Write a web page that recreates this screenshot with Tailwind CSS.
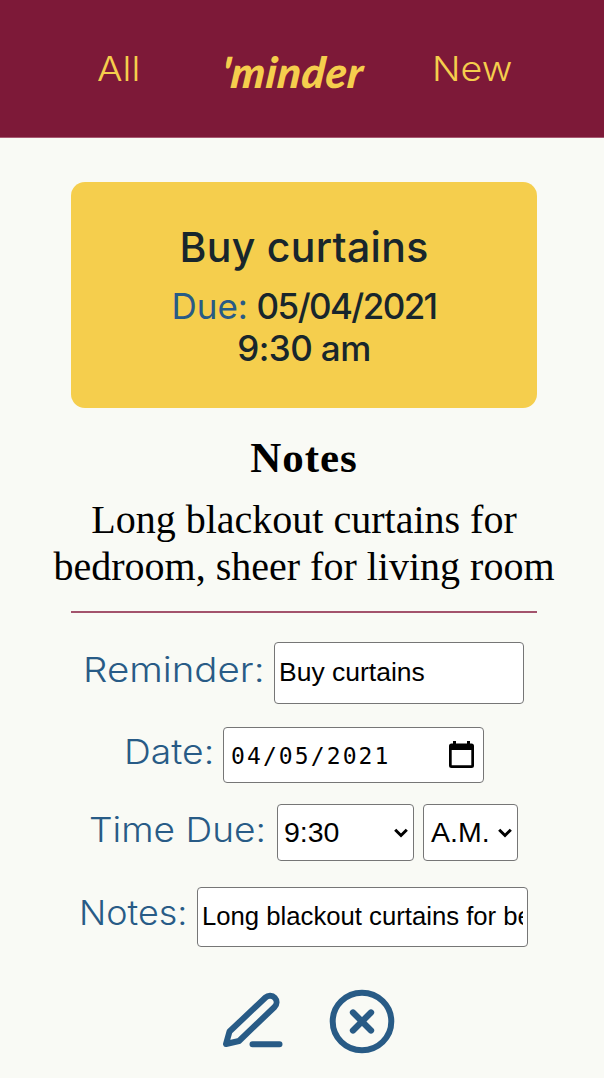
<!DOCTYPE html>
<html lang="en">
<head>
<meta charset="utf-8">
<title>'minder</title>
<script src="https://cdn.jsdelivr.net/npm/@tailwindcss/browser@4"></script>
</head>
<body class="h-[1078px] w-[604px] overflow-hidden bg-[#f9faf5] font-['Inter',sans-serif] text-black">
<header class="flex h-[138px] items-start border-b border-[#a85a72] bg-[#7d1938] pl-[97px] font-[330] whitespace-nowrap text-[#f5ce4d]">
  <a class="mt-[48px] w-[125px] origin-left scale-x-[1.1] text-[34.5px] leading-[42px]">All</a>
  <h1 class="mt-[46px] w-[210px] origin-left -skew-x-6 font-['Lato',sans-serif] text-[43px] leading-[52px] font-black tracking-[0.7px] italic">'minder</h1>
  <a class="mt-[48px] origin-left scale-x-[1.09] text-[34.5px] leading-[42px]">New</a>
</header>
<main class="flex flex-col">
  <section class="mt-[44px] ml-[71px] flex h-[226px] w-[466px] flex-col items-center rounded-[14px] bg-[#f5ce4d] pt-[40px] font-medium whitespace-nowrap text-[#18262c]">
    <h2 class="text-[41px] leading-[50px] tracking-[0.3px]">Buy curtains</h2>
    <p class="mt-[13px] text-[35px] leading-[42px] tracking-[-1.6px]"><span class="mr-[1px] font-normal tracking-normal text-[#285b86]">Due:</span> 05/04/2021</p>
    <p class="text-[35px] leading-[42px] tracking-[-0.6px]">9:30 am</p>
  </section>
  <section class="flex flex-col items-center pl-[4px] font-['Liberation_Serif',serif] whitespace-nowrap">
    <h3 class="mt-[25px] text-[43px] leading-[50px] font-bold tracking-[1px]">Notes</h3>
    <p class="mt-[13px] text-[40px] leading-[47px]">Long blackout curtains for</p>
    <p class="text-[40px] leading-[47px]">bedroom, sheer for living room</p>
  </section>
  <hr class="mt-[21px] ml-[71px] h-[2px] w-[466px] border-0 bg-[#a3536c]">

  <form class="flex flex-col font-['Liberation_Sans',sans-serif] whitespace-nowrap">
    <div class="mt-[29px] flex h-[62px] pl-[83px]">
      <label class="mt-[7px] w-[191px] origin-left scale-x-[1.115] font-['Inter',sans-serif] text-[34.5px] leading-[42px] font-[330] text-[#285b86]">Reminder:</label>
      <div class="flex w-[250px] items-center rounded-[4px] border-[1.5px] border-[#767676] bg-white pl-[4px] pb-[1px] text-[26.5px]">Buy curtains</div>
    </div>
    <div class="mt-[23px] flex h-[56px] pl-[124px]">
      <label class="mt-[4px] w-[99px] origin-left scale-x-[1.08] font-['Inter',sans-serif] text-[34.5px] leading-[42px] font-[330] text-[#285b86]">Date:</label>
      <div class="flex w-[261px] items-center justify-between rounded-[4px] border-[1.5px] border-[#767676] bg-white pr-[9px] pl-[7px]">
        <span class="mt-[3px] font-['DejaVu_Sans_Mono',monospace] text-[23px] tracking-[2.1px]">04/05/2021</span>
        <svg class="mb-[2px] h-[27px] w-[25px]" viewBox="0 0 25 27"><path d="M4 0h3v2.500h11V0h3v2.500h1.500A2.500 2.500 0 0 1 25 5v19.500a2.500 2.500 0 0 1-2.500 2.500h-20A2.500 2.500 0 0 1 0 24.500V5a2.500 2.500 0 0 1 2.500-2.500H4zM2.700 9v15.300h19.600V9z"/></svg>
      </div>
    </div>
    <div class="mt-[21px] flex h-[57px] pl-[89px]">
      <label class="mt-[5px] w-[188px] origin-left scale-x-[1.075] font-['Inter',sans-serif] text-[34.5px] leading-[42px] font-[330] text-[#285b86]">Time Due:</label>
      <div class="flex w-[137px] items-center justify-between rounded-[4px] border border-[#767676] bg-white pr-[5px] pl-[6px] text-[28.5px]">9:30
        <svg class="h-[10px] w-[14px]" viewBox="0 0 14 10" fill="none" stroke="#000" stroke-width="3"><path d="M1.200 1.700 7 7.500l5.800-5.800"/></svg>
      </div>
      <div class="ml-[9px] flex w-[95px] items-center justify-between rounded-[4px] border border-[#767676] bg-white pr-[5px] pl-[7px] text-[28.5px]">A.M.
        <svg class="h-[10px] w-[14px]" viewBox="0 0 14 10" fill="none" stroke="#000" stroke-width="3"><path d="M1.200 1.700 7 7.500l5.800-5.800"/></svg>
      </div>
    </div>
    <div class="mt-[26px] flex h-[60px] pl-[79px]">
      <label class="mt-[5px] w-[118px] origin-left scale-x-[1.04] font-['Inter',sans-serif] text-[34.5px] leading-[42px] font-[330] text-[#285b86]">Notes:</label>
      <div class="flex w-[331px] items-center rounded-[4px] border border-[#767676] bg-white px-[4px] pb-[1px] text-[25.7px]"><span class="w-full overflow-hidden">Long blackout curtains for bedroom, sheer for living room</span></div>
    </div>
  </form>

  <div class="mt-[41px] flex pl-[222px] text-[#285b86]">
    <svg class="h-[66px] w-[62px]" viewBox="222 988 62 66" fill="none" stroke="currentColor" stroke-width="6" stroke-linecap="round" stroke-linejoin="round"><path d="M265.500 997.500a6.500 6.500 0 0 1 9 9.500L239 1041 226 1044l3.500-12.500zM252.500 1044.300h27"/></svg>
    <svg class="ml-[44px] h-[66px] w-[68px]" viewBox="328 988 68 66" fill="none" stroke="currentColor" stroke-width="6" stroke-linecap="round"><ellipse cx="362" cy="1021.500" rx="29.300" ry="28.700"/><path d="m353 1012.500 18 18m0-18-18 18" stroke-width="6.300"/></svg>
  </div>
</main>
</body>
</html>
